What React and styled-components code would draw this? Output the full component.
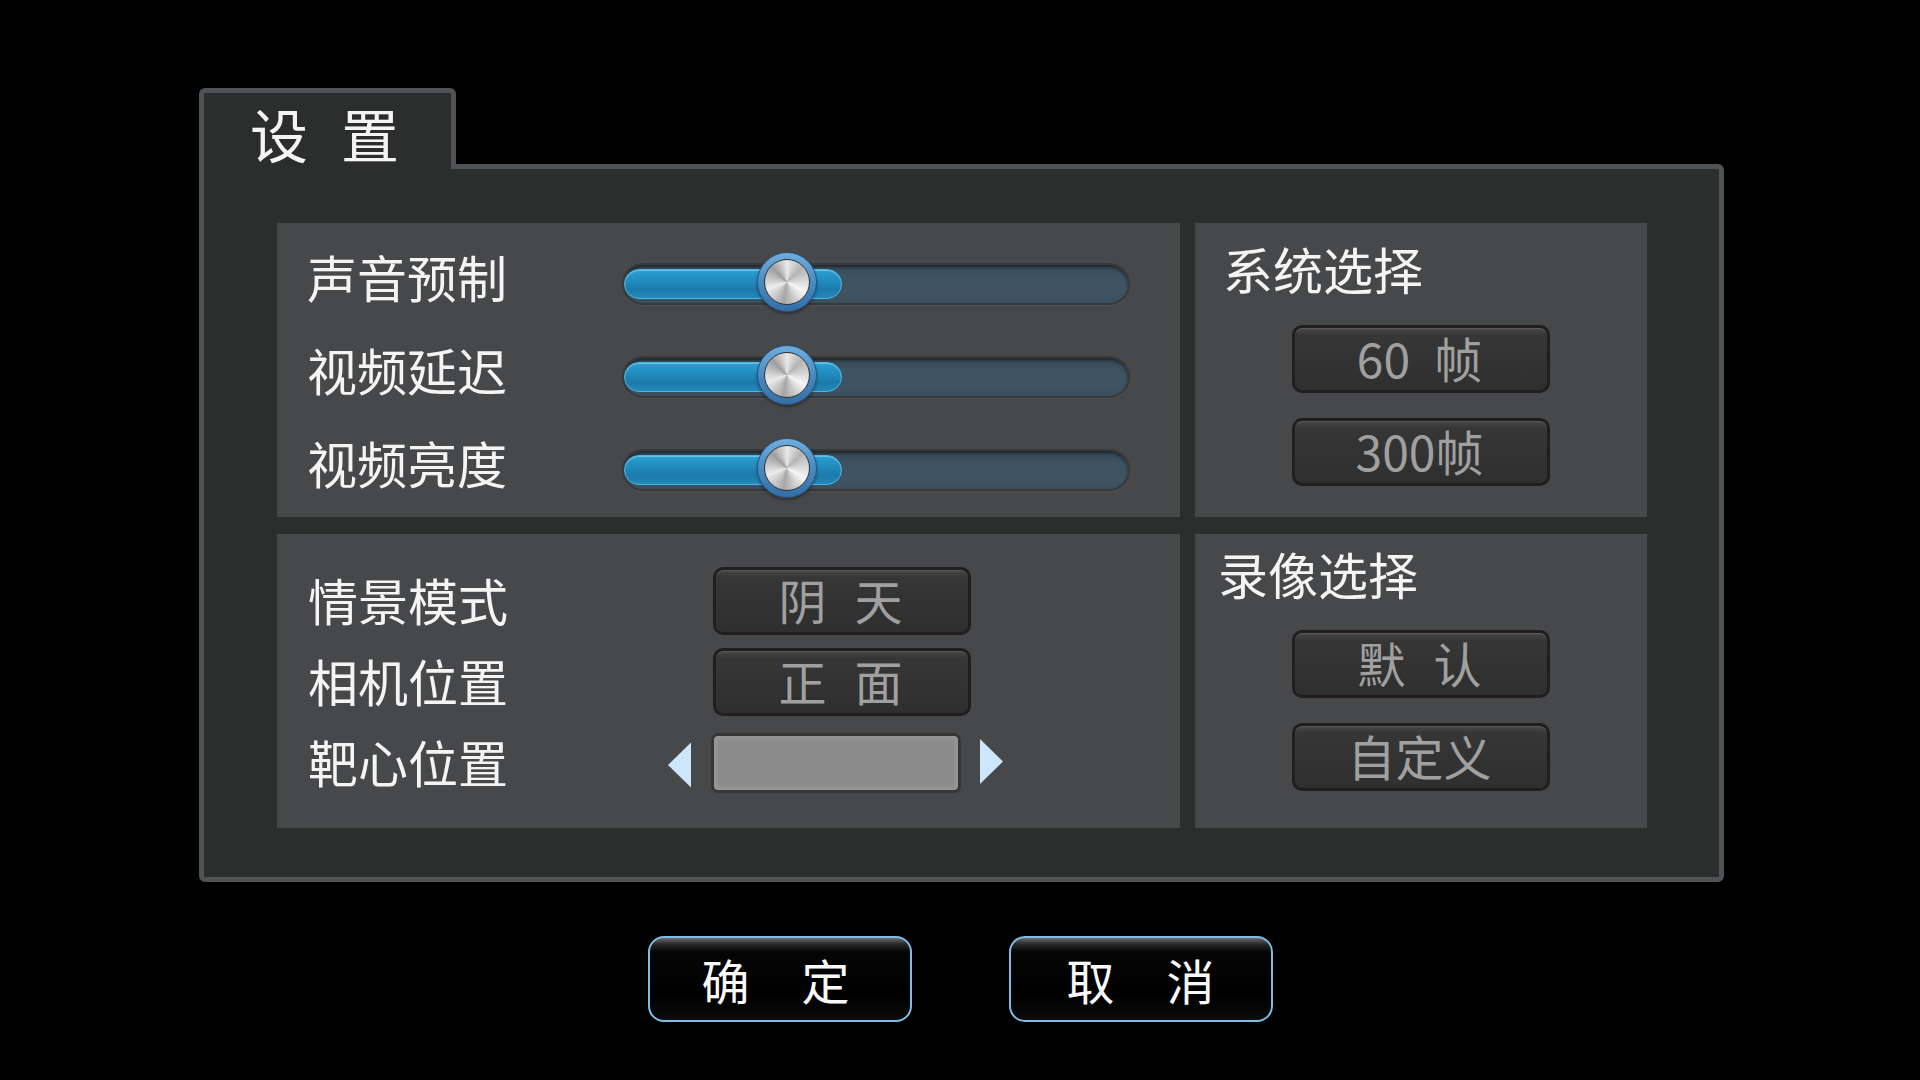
import React from "react";
import styled, { createGlobalStyle } from "styled-components";

const GlobalStyle = createGlobalStyle`
  html, body {
    margin: 0;
    padding: 0;
    background: #000;
  }
  body {
    min-height: 100vh;
    font-family: "Noto Sans CJK SC", "Noto Sans", sans-serif;
  }
  * { box-sizing: border-box; }
`;

const Page = styled.div`
  width: 1920px;
  height: 1080px;
  padding-top: 88px;
  display: flex;
  flex-direction: column;
  background: #000;
`;

const Window = styled.section`
  margin-left: 199px;
  width: 1525px;
  display: flex;
  flex-direction: column;
`;

const Tab = styled.div`
  position: relative;
  z-index: 1;
  width: 257px;
  height: 81px;
  margin-bottom: -5px;
  border: 5px solid #4f5355;
  border-bottom: 0;
  border-radius: 6px 6px 0 0;
  background: #2c2e2d;
  padding: 11px 0 0 46px;
`;

const Spaced = styled.div`
  display: flex;
  align-items: center;
  justify-content: ${(p) => p.$justify || "flex-start"};
  gap: ${(p) => p.$gap || 0}px;
  line-height: 1;
  white-space: pre;
`;

const TabTitle = styled(Spaced)`
  font-size: 58px;
  color: #f4f4f4;
`;

const Body = styled.div`
  border: 5px solid #4f5355;
  border-radius: 0 6px 6px 6px;
  background: #2c2e2d;
  padding: 54px 72px 49px 73px;
`;

const Grid = styled.div`
  display: grid;
  grid-template-columns: 903px 452px;
  grid-template-rows: 294px 294px;
  column-gap: 15px;
  row-gap: 17px;
`;

const Panel = styled.div`
  background: #47484a;
  display: flex;
  flex-direction: column;
`;

const SliderPanel = styled(Panel)`
  padding: 12px 0 0 30px;
`;

const ModePanel = styled(Panel)`
  padding: 26px 0 0 31px;
`;

const OptionPanel = styled(Panel)`
  align-items: center;
  padding-top: ${(p) => p.$top}px;
`;

const SliderRow = styled.div`
  height: 93px;
  display: flex;
  align-items: center;
`;

const ModeRow = styled.div`
  height: 81px;
  display: flex;
  align-items: center;
`;

const Label = styled.div`
  width: ${(p) => p.$width}px;
  flex: none;
  font-size: 50px;
  line-height: 1;
  color: #f4f4f4;
  margin-top: ${(p) => p.$shift || 0}px;
`;

const Slider = styled.div`
  position: relative;
  width: 508px;
  height: 42px;
  margin-top: 4px;
`;

const Track = styled.div`
  position: absolute;
  inset: 0;
  border-radius: 21px;
  background: linear-gradient(#344551, #3d5362 30%, #3e5463 80%, #3a4e5c);
  border: 2px solid #37393b;
  box-shadow: inset 0 2px 3px rgba(0, 0, 0, 0.45), 0 1px 0 rgba(255, 255, 255, 0.05);
`;

const Fill = styled.div`
  position: absolute;
  left: 2px;
  top: 6px;
  bottom: 6px;
  border-radius: 15px;
  border: 1px solid #4fb5e2;
  background: linear-gradient(#2aa0d2 0%, #218dbf 35%, #1c7aab 70%, #2389bb 100%);
  box-shadow: inset 0 1px 1px rgba(180, 230, 255, 0.5);
`;

const Knob = styled.div`
  position: absolute;
  top: -11px;
  width: 60px;
  height: 60px;
  border-radius: 50%;
  background: linear-gradient(#6eaede, #4a8bc3 50%, #326fa6);
  border: 1px solid #2b5178;
  box-shadow: 0 2px 3px rgba(0, 0, 0, 0.35);
  display: flex;
  align-items: center;
  justify-content: center;
`;

const Metal = styled.div`
  width: 46px;
  height: 46px;
  border-radius: 50%;
  border: 1px solid #2e3236;
  background: conic-gradient(
    from 0deg,
    #e9e9e9,
    #b4b4b4 45deg,
    #f6f6f6 120deg,
    #a6a6a6 190deg,
    #ececec 250deg,
    #9e9e9e 315deg,
    #e9e9e9
  );
`;

const OptionTitle = styled.div`
  align-self: flex-start;
  height: 60px;
  line-height: 60px;
  font-size: 50px;
  color: #f4f4f4;
  padding-left: ${(p) => p.$left}px;
  margin-top: -3px;
  margin-bottom: 27px;
`;

const OptionList = styled.div`
  display: flex;
  flex-direction: column;
  gap: 25px;
`;

const OptionButton = styled.div`
  width: 258px;
  height: 68px;
  border: 3px solid #221e1f;
  border-radius: 10px;
  background: linear-gradient(#474747 0%, #363636 12%, #323232 60%, #2f2f2f 100%);
  box-shadow: inset 0 1px 1px rgba(255, 255, 255, 0.12);
  color: #a0a0a0;
  font-size: 48px;
`;

const ButtonText = styled(Spaced)`
  height: 100%;
  justify-content: center;
  padding-bottom: ${(p) => p.$lift || 0}px;
  padding-right: ${(p) => p.$nudge || 0}px;
`;

const Picker = styled.div`
  display: flex;
  align-items: center;
  margin-left: -45px;
`;

const Arrow = styled.div`
  width: 23px;
  height: 45px;
  background: #cde6fb;
  clip-path: ${(p) =>
    p.$dir === "left"
      ? "polygon(100% 0, 0 50%, 100% 100%)"
      : "polygon(0 0, 100% 50%, 0 100%)"};
  margin-top: ${(p) => (p.$dir === "left" ? 5 : -2)}px;
`;

const ValueBox = styled.div`
  width: 250px;
  height: 60px;
  margin: 0 19px 0 20px;
  border: 3px solid #363637;
  border-radius: 7px;
  background: #8a8a8a;
  box-shadow: inset 0 0 6px 2px #9c9c9c;
`;

const Actions = styled.div`
  display: flex;
  justify-content: center;
  gap: 97px;
  margin-top: 54px;
`;

const ActionButton = styled.button`
  width: 264px;
  height: 86px;
  padding: 0;
  border: 2px solid #7ebee6;
  border-radius: 16px;
  background: linear-gradient(#6a6a6a 0px, #2a2a2a 6px, #050505 14px, #000 70%, #0c0c0c 100%);
  color: #fafafa;
  font-family: "Noto Sans CJK SC", sans-serif;
  font-size: 48px;
  cursor: pointer;
`;

const sliders = [
  { label: "声音预制", value: 165 },
  { label: "视频延迟", value: 165 },
  { label: "视频亮度", value: 165 },
];

function Chars({ text, gap, lift, nudge, as: Comp = Spaced }) {
  const parts = text.split(" ");
  return (
    <Comp $gap={gap} $lift={lift} $nudge={nudge}>
      {parts.map((p, i) => (
        <span key={i}>{p}</span>
      ))}
    </Comp>
  );
}

function SliderControl({ value }) {
  return (
    <Slider>
      <Track />
      <Fill style={{ width: value + 53 }} />
      <Knob style={{ left: value - 30 }}>
        <Metal />
      </Knob>
    </Slider>
  );
}

function Option({ text, gap }) {
  return (
    <OptionButton>
      <Chars text={text} gap={gap} lift={4} nudge={3} as={ButtonText} />
    </OptionButton>
  );
}

export default function App() {
  return (
    <>
      <GlobalStyle />
      <Page>
        <Window>
          <Tab>
            <Chars text="设 置" gap={33} as={TabTitle} />
          </Tab>
          <Body>
            <Grid>
              <SliderPanel>
                {sliders.map((s) => (
                  <SliderRow key={s.label}>
                    <Label $width={315} $shift={-12}>{s.label}</Label>
                    <SliderControl value={s.value} />
                  </SliderRow>
                ))}
              </SliderPanel>

              <OptionPanel $top={18}>
                <OptionTitle $left={28}>系统选择</OptionTitle>
                <OptionList>
                  <Option text="60 帧" gap={24} />
                  <Option text="300帧" gap={0} />
                </OptionList>
              </OptionPanel>

              <ModePanel>
                <ModeRow>
                  <Label $width={405} $shift={-3}>情景模式</Label>
                  <Option text="阴 天" gap={28} />
                </ModeRow>
                <ModeRow>
                  <Label $width={405} $shift={-3}>相机位置</Label>
                  <Option text="正 面" gap={28} />
                </ModeRow>
                <ModeRow>
                  <Label $width={405} $shift={-3}>靶心位置</Label>
                  <Picker>
                    <Arrow $dir="left" />
                    <ValueBox />
                    <Arrow $dir="right" />
                  </Picker>
                </ModeRow>
              </ModePanel>

              <OptionPanel $top={12}>
                <OptionTitle $left={23}>录像选择</OptionTitle>
                <OptionList>
                  <Option text="默 认" gap={28} />
                  <Option text="自定义" gap={0} />
                </OptionList>
              </OptionPanel>
            </Grid>
          </Body>
        </Window>
        <Actions>
          <ActionButton>
            <Chars text="确 定" gap={52} nudge={8} as={ButtonText} />
          </ActionButton>
          <ActionButton>
            <Chars text="取 消" gap={52} as={ButtonText} />
          </ActionButton>
        </Actions>
      </Page>
    </>
  );
}
